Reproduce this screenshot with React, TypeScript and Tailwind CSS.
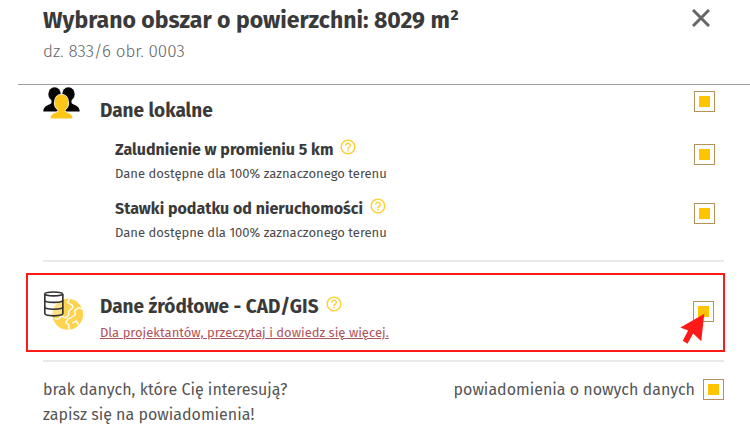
import type { ReactNode } from 'react'
import clsx from 'clsx'
import { MdHelpOutline } from 'react-icons/md'

const DATASETS = [
  { id: 'population', title: 'Zaludnienie w promieniu 5 km' },
  { id: 'tax-rates', title: 'Stawki podatku od nieruchomości' },
]

function UsersIcon() {
  return (
    <svg aria-hidden="true" viewBox="44 36 112 96" className="h-8 w-[37px]">
      <g fill="#050505">
        <ellipse cx="79" cy="57" rx="19" ry="21" />
        <ellipse cx="121" cy="57" rx="19" ry="21" />
        <path d="M45 110c0-12 8-18 20-22 5-3 6-6 4-14h22v36zM155 110c0-12-8-18-20-22-5-3-6-6-4-14h-22v36z" />
      </g>
      <path
        d="M67 131c0-10 6-14 17-18 6-2 8-5 4-10-6-5-9-11-9-18 0-17 9-27 21-27s21 10 21 27c0 7-3 13-9 18-4 5-2 8 4 10 11 4 17 8 17 18z"
        fill="#ffc61a"
        stroke="#fff"
        strokeWidth="4"
        paintOrder="stroke"
      />
    </svg>
  )
}

function SourceDataIcon() {
  return (
    <svg aria-hidden="true" viewBox="68 92 124 122" className="h-10 w-[41px]" fill="none">
      <circle cx="143" cy="163" r="47" fill="#ffd34f" />
      <g stroke="#fff" strokeWidth="4" strokeLinejoin="round">
        <path d="M150 114l-8 13 15 8 2 7-12 10-2 14-8 8-14-5-9 9-11-2" />
        <path d="M189 147l-14-4-11 9 2 12-12 9-10 4-7 11 9 7 1 16" />
        <path d="M176 196l-7-13-12 7" />
      </g>
      <path
        d="M73 101v60c0 9 55 9 55 0v-60"
        fill="#fff"
        fillOpacity="0.3"
        stroke="#333"
        strokeWidth="5"
      />
      <ellipse cx="100" cy="101" rx="27" ry="6" fill="#fff" stroke="#333" strokeWidth="5" />
      <path d="M73 120c0 9 55 9 55 0M73 141c0 9 55 9 55 0" stroke="#333" strokeWidth="5" />
    </svg>
  )
}

function Pointer() {
  return (
    <svg
      aria-hidden="true"
      viewBox="62 156 74 92"
      className="pointer-events-none absolute top-5 right-[18px] h-[31px] w-[25px]"
    >
      <path d="M134 158L63 199l23 9-16 30 14 9 17-30 24 23z" fill="#ff1a1a" />
    </svg>
  )
}

function Checkbox({ id }: { id: string }) {
  return (
    <input
      id={id}
      type="checkbox"
      defaultChecked
      className="block size-[21px] shrink-0 appearance-none border border-[#b1935a] bg-white p-1 checked:bg-[#ffc400] checked:bg-clip-content"
    />
  )
}

function Row({
  id,
  title,
  className,
  size = 'sm',
  children,
}: {
  id: string
  title: string
  className?: string
  size?: 'sm' | 'lg'
  children?: ReactNode
}) {
  return (
    <div className={clsx('flex items-start gap-1.5', className)}>
      <label
        htmlFor={id}
        className={clsx('leading-7 font-bold', size === 'lg' ? 'text-[19px]' : 'text-[16px]')}
      >
        {title}
      </label>
      <button type="button" aria-label="Pomoc" className="pt-0.5 text-[#ffd23c]">
        <MdHelpOutline className="size-[18px]" />
      </button>
      <div className="relative ml-auto pt-2 pr-[9px]">
        <Checkbox id={id} />
        {children}
      </div>
    </div>
  )
}

export default function App() {
  return (
    <div className="bg-white font-['Fira_Sans','Noto_Sans',sans-serif] text-[#3a3a3a]">
      <header className="ml-[18px] flex h-[85px] items-start justify-between border-b border-[#a0a0a0] pr-10 pl-[25px]">
        <div>
          <h1 className="pt-1 text-[23px] leading-8 font-bold">
            Wybrano obszar o powierzchni: 8029 m²
          </h1>
          <p className="pt-1 text-[17px] leading-6 font-light text-[#666]">dz. 833/6 obr. 0003</p>
        </div>
        <button type="button" aria-label="Zamknij" className="pt-[9px] text-[#666]">
          <svg viewBox="0 0 18 18" className="size-[18px]" stroke="currentColor" strokeWidth="3">
            <path d="M1 1l16 16M17 1L1 17" />
          </svg>
        </button>
      </header>

      <main className="pr-[26px] pl-[43px]">
        <section className="border-b-2 border-[#e9e9e9] pb-1.5">
          <div className="flex h-[51px] gap-5">
            <div className="w-[37px] pt-0.5">
              <UsersIcon />
            </div>
            <div className="flex flex-1 items-start justify-between pr-[9px]">
              <label htmlFor="local" className="pt-3 text-[19px] leading-7 font-bold">
                Dane lokalne
              </label>
              <div className="pt-1.5">
                <Checkbox id="local" />
              </div>
            </div>
          </div>
          {DATASETS.map(({ id, title }) => (
            <div key={id} className="h-[59px] pl-[72px]">
              <Row id={id} title={title} className="h-7" />
              <p className="text-[13px] leading-5 text-[#4a4a4a]">
                Dane dostępne dla 100% zaznaczonego terenu
              </p>
            </div>
          ))}
        </section>

        <section className="-mr-px -ml-[17px] mt-[11px] flex h-[79px] gap-4 border-2 border-[#ff1a1a] pl-[15px]">
          <div className="w-[41px] pt-4">
            <SourceDataIcon />
          </div>
          <div className="flex-1 pt-[18px]">
            <Row id="source" title="Dane źródłowe - CAD/GIS" size="lg" className="h-7">
              <Pointer />
            </Row>
            <a href="#source-data" className="block text-[13px] leading-6 text-[#b0525a] underline">
              Dla projektantów, przeczytaj i dowiedz się więcej.
            </a>
          </div>
        </section>

        <footer className="mt-2 flex items-start justify-between border-t-2 border-[#e9e9e9] pt-[15px] text-[16px] leading-[25px] text-[#555]">
          <p>
            brak danych, które Cię interesują?
            <br />
            zapisz się na powiadomienia!
          </p>
          <div className="flex items-center gap-2">
            <label htmlFor="notify">powiadomienia o nowych danych</label>
            <Checkbox id="notify" />
          </div>
        </footer>
      </main>
    </div>
  )
}
